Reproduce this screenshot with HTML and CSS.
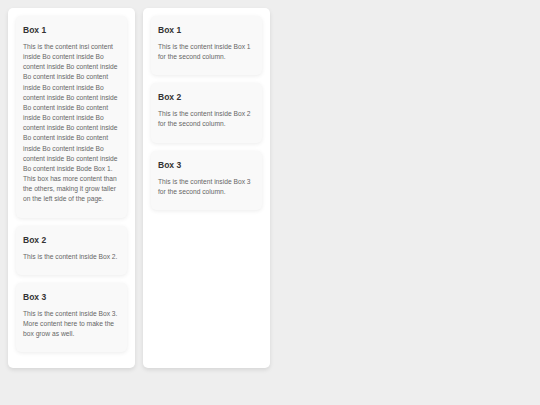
FILE: index.html
```html
<!DOCTYPE html>
<html lang="en">
<head>
    <meta charset="UTF-8">
    <meta name="viewport" content="width=device-width, initial-scale=1.0">
    <title>Two Columns</title>
    <link rel="stylesheet" href="styles.css">
</head>
<body>
    <div class="container">
        <div class="column">
            <div class="box">
                <h3>Box 1</h3>
                <p>This is the content insi content inside Bo content inside Bo content inside Bo content inside Bo content inside Bo content inside Bo content inside Bo content inside Bo content inside Bo content inside Bo content inside Bo content inside Bo content inside Bo content inside Bo content inside Bo content inside Bo content inside Bo content inside Bo content inside Bo content inside Bode Box 1. This box has more content than the others, making it grow taller on the left side of the page.</p>
            </div>
            <div class="box">
                <h3>Box 2</h3>
                <p>This is the content inside Box 2.</p>
            </div>
            <div class="box">
                <h3>Box 3</h3>
                <p>This is the content inside Box 3. More content here to make the box grow as well.</p>
            </div>
        </div>

        <div class="column">
            <div class="box">
                <h3>Box 1</h3>
                <p>This is the content inside Box 1 for the second column.</p>
            </div>
            <div class="box">
                <h3>Box 2</h3>
                <p>This is the content inside Box 2 for the second column.</p>
            </div>
            <div class="box">
                <h3>Box 3</h3>
                <p>This is the content inside Box 3 for the second column.</p>
            </div>
        </div>
    </div>
</body>
</html>
```

FILE: styles.css
```css
body {
    font-family: "Liberation Sans", Arial, sans-serif;
    background-color: #eeeeee;
    margin: 0;
    padding: 8px;
}

.container {
    display: flex;
    align-items: stretch;
    gap: 8px;
}

.column {
    width: 127px;
    box-sizing: border-box;
    background-color: #fff;
    padding: 8px;
    border-radius: 5px;
    box-shadow: 0 2px 4px rgba(0, 0, 0, 0.1);
}

.box {
    background-color: #f9f9f9;
    padding: 9px 7px;
    margin-bottom: 8px;
    border-radius: 5px;
    box-shadow: 0 1px 4px rgba(0, 0, 0, 0.08);
}

.box h3 {
    margin: 0 0 6px;
    font-size: 8.5px;
    line-height: 11px;
    color: #333;
}

.box p {
    margin: 0 0 4px;
    font-size: 6.7px;
    line-height: 10.15px;
    color: #666;
}
```
